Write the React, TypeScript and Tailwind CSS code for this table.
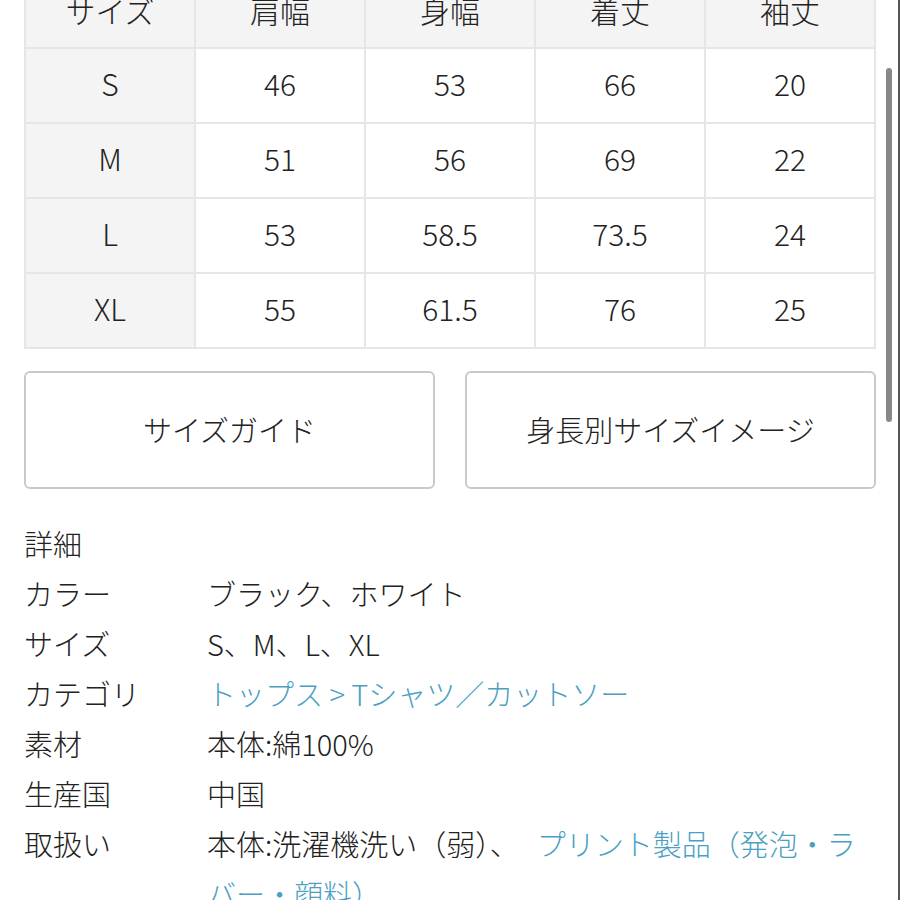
const font = { fontFamily: '"Noto Sans CJK JP", "Noto Sans", sans-serif' };

const header = ["サイズ", "肩幅", "身幅", "着丈", "袖丈"];
const rows = [
  ["S", "46", "53", "66", "20"],
  ["M", "51", "56", "69", "22"],
  ["L", "53", "58.5", "73.5", "24"],
  ["XL", "55", "61.5", "76", "25"],
];

const details: { label: string; value: React.ReactNode }[] = [
  { label: "カラー", value: "ブラック、ホワイト" },
  { label: "サイズ", value: "S、M、L、XL" },
  {
    label: "カテゴリ",
    value: <span className="text-[#4a9fc2]">トップス &gt; Tシャツ／カットソー</span>,
  },
  { label: "素材", value: "本体:綿100%" },
  { label: "生産国", value: "中国" },
  {
    label: "取扱い",
    value: (
      <>
        本体:洗濯機洗い（弱）、
        <span className="ml-[18px] text-[#4a9fc2]">プリント製品（発泡・ラバー・顔料）</span>
      </>
    ),
  },
];

export default function App() {
  return (
    <div
      style={font}
      className="relative w-[900px] h-[900px] overflow-hidden bg-white text-[#222]"
    >
      <div className="pl-6 pr-6 -mt-[29px]">
        <table className="w-[852px] table-fixed border-collapse text-[30px] font-light">
          <thead>
            <tr className="h-[76px] bg-[#f4f4f4]">
              {header.map((h) => (
                <th key={h} className="border-2 border-[#e6e6e6] font-light">
                  {h}
                </th>
              ))}
            </tr>
          </thead>
          <tbody>
            {rows.map((r) => (
              <tr key={r[0]} className="h-[75px]">
                {r.map((c, i) => (
                  <td
                    key={i}
                    className={`border-2 border-[#e6e6e6] text-center ${
                      i === 0 ? "bg-[#f4f4f4]" : "bg-white"
                    }`}
                  >
                    <span className="relative -top-[2px]">{c}</span>
                  </td>
                ))}
              </tr>
            ))}
          </tbody>
        </table>

        <div className="mt-[22px] flex gap-[30px] w-[852px]">
          <button className="h-[118px] w-[411px] rounded-[6px] border-2 border-[#c9c9c9] text-[29px] font-light">
            サイズガイド
          </button>
          <button className="h-[118px] w-[411px] rounded-[6px] border-2 border-[#c9c9c9] text-[29px] font-light">
            身長別サイズイメージ
          </button>
        </div>

        <div className="mt-[29px] text-[29px] font-light leading-[50px]">
          <div>詳細</div>
          {details.map((d) => (
            <div key={d.label} className="flex">
              <div className="w-[183px] shrink-0">{d.label}</div>
              <div className="flex-1 pr-3">{d.value}</div>
            </div>
          ))}
        </div>
      </div>

      <div className="absolute right-[8px] top-[68px] h-[354px] w-[6px] rounded-full bg-[#888]" />
      <div className="absolute right-0 top-0 h-full w-[2px] bg-[#555]" />
    </div>
  );
}
